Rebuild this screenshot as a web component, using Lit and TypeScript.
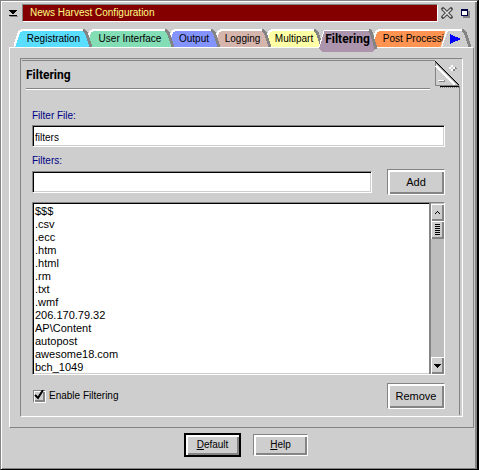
import { LitElement, html, svg, css } from "lit";
import { customElement, property, state } from "lit/decorators.js";
import { classMap } from "lit/directives/class-map.js";

interface Tab {
  label: string;
  width: number;
  color: string;
}

const TABS: Tab[] = [
  { label: "Registration", width: 79, color: "#5adeff" },
  { label: "User Interface", width: 90, color: "#84deb5" },
  { label: "Output", width: 54, color: "#8494ff" },
  { label: "Logging", width: 59, color: "#d6b5ad" },
  { label: "Multipart", width: 60, color: "#ffffa5" },
  { label: "Filtering", width: 63, color: "#ad94ad" },
  { label: "Post Processing", width: 96, color: "#ff9452" },
];

const FILTERS = [
  "$$$", ".csv", ".ecc", ".htm", ".html", ".rm", ".txt", ".wmf",
  "206.170.79.32", "AP\\Content", "autopost", "awesome18.com", "bch_1049",
];

/** Trapezoid outline shared by every tab: lit on the left, shaded on the right. */
function tabShape(w: number, h: number, color: string) {
  return svg`
    <path d="M0 ${h} L1 ${h - 3} L5 3 L8 0 H${w - 9} L${w - 7} 2 L${w - 1} ${h - 2} V${h} Z" fill=${color}></path>
    <path d="M${w - 10} 1 L${w - 7} 3 L${w - 2} ${h}" fill="none" stroke="#848484" stroke-width="3"></path>
    <path d="M0 ${h} L1 ${h - 3} L5 3 L8 1 H${w - 10}" fill="none" stroke="#fff" stroke-width="2"></path>`;
}

@customElement("config-tab")
export class ConfigTab extends LitElement {
  @property() label = "";
  @property() color = "";
  @property({ type: Number }) width = 60;
  @property({ type: Boolean }) active = false;

  static styles = css`
    :host { display: block; flex: none; }
    .tab {
      position: relative;
      display: block;
      height: 18px;
      padding: 0;
      border: 0;
      background: none;
      color: #000;
      font: 10px/20px "Liberation Sans", Arial, sans-serif;
      white-space: nowrap;
    }
    .tab.active { height: 23px; font-family: Roboto, sans-serif; font-weight: bold; font-size: 12px; }
    .active .text { height: 23px; }
    .shape { position: absolute; left: 0; top: 0; }
    .text { position: relative; display: block; }
  `;

  render() {
    const h = this.active ? 23 : 18;
    return html`
      <button class=${classMap({ tab: true, active: this.active })} role="tab"
        aria-selected=${this.active ? "true" : "false"} style="width:${this.width}px">
        <svg class="shape" width=${this.width} height=${h} aria-hidden="true" shape-rendering="crispEdges">
          ${this.active
            ? svg`
              <path d="M3 19 L9 1 H${this.width - 9} L${this.width - 2} 19 L${this.width - 7} 23 H6 Z" fill=${this.color}></path>
              <path d="M${this.width - 10} 1 L${this.width - 8} 3 L${this.width - 3} 20" fill="none" stroke="#848484" stroke-width="3"></path>
              <path d="M3 18 L8 2 L10 1 H${this.width - 10}" fill="none" stroke="#fff" stroke-width="1"></path>`
            : tabShape(this.width, h, this.color)}
        </svg>
        <span class="text">${this.label}</span>
      </button>`;
  }
}

@customElement("app-root")
export class AppRoot extends LitElement {
  @state() private enabled = true;

  static styles = css`
    :host {
      display: block;
      color: #000;
      font: 10px/14px "Liberation Sans", Arial, sans-serif;
    }
    * { box-sizing: border-box; }
    button, input, select { font: inherit; color: inherit; margin: 0; border-radius: 0; }
    svg { display: block; }

    .window {
      display: flex;
      flex-direction: column;
      min-height: 100vh;
      padding: 2px 2px 0 4px;
      background: #cecece;
      border: 1px solid #848484;
      border-right: 2px solid #000;
      border-bottom: 1px solid #000;
      box-shadow: inset 1px 1px #fff, inset -2px -1px #848484;
    }

    .titlebar { display: flex; align-items: center; padding: 1px 5px 0 0; }
    .icon { flex: none; padding: 0; border: 0; background: none; }
    .sysmenu { width: 17px; padding-left: 4px; }
    .title {
      flex: 1;
      height: 18px;
      margin: 0 3px 0 0;
      padding-left: 7px;
      background: #840000;
      border: 1px solid #848484;
      border-color: #848484 #fff #fff #848484;
      color: #ffff84;
      font-size: 10px;
      font-weight: normal;
      line-height: 16px;
    }
    .max { margin-left: 7px; }

    .tabs { display: flex; position: relative; height: 18px; margin: 7px 0 0 9px; }
    .tabs config-tab { position: relative; }
    .tabs config-tab + config-tab { margin-left: -8px; }
    .scroller {
      position: absolute;
      z-index: 30;
      right: 3px;
      top: 0;
      background: #cecece;
      clip-path: polygon(0 100%, 5px 0, 100% 0, 100% 100%);
    }

    .page {
      flex: 1;
      display: flex;
      margin: 0 1px 0 4px;
      padding: 10px;
      border: 1px solid #fff;
      border-right-color: #848484;
      border-bottom-color: #848484;
    }
    .group {
      flex: 1;
      display: flex;
      flex-direction: column;
      position: relative;
      padding: 2px 2px 6px 5px;
      border: 1px solid #848484;
      border-right: 1px solid #fff;
      border-bottom: 1px solid #fff;
    }
    .group::before {
      content: "";
      position: absolute;
      left: 1px; top: 1px; right: 27px;
      height: 1px;
      background: #848484;
    }
    .group::after {
      content: "";
      position: absolute;
      right: 2px; top: 27px; bottom: 1px;
      width: 1px;
      background: #848484;
    }
    .fold { position: absolute; right: 0; top: 0; }
    .heading {
      height: 29px;
      margin: 0 30px 0 0;
      border-bottom: 1px solid #fff;
      box-shadow: inset 0 -1px #848484;
      font: bold 12px/28px Roboto, sans-serif;
    }
    .form { flex: 1; display: flex; flex-direction: column; padding: 18px 15px 0 6px; }
    .label { color: #000084; line-height: 16px; }
    .field {
      width: 100%;
      height: 22px;
      padding: 3px 2px 0;
      background: #fff;
      border: 1px solid #848484;
      border-right-color: #fff;
      border-bottom-color: #fff;
      box-shadow: inset 1px 1px #000, inset -1px -1px #cecece;
      outline: none;
    }
    .filename { margin: 1px 0 6px; }
    .addrow { display: grid; grid-template-columns: 1fr 58px; column-gap: 15px; align-items: center; }

    .btn {
      padding: 0;
      background: #cecece;
      border: 1px solid #848484;
      border-right-color: #fff;
      border-bottom-color: #fff;
      box-shadow: inset 2px 2px #fff, inset -2px -2px #848484;
      text-align: center;
    }
    .tall { height: 26px; font-size: 11px; line-height: 24px; }
    .footer { display: flex; justify-content: center; align-items: center; gap: 12px; height: 41px; padding: 0 0 8px 12px; }
    .footer .btn { width: 55px; height: 22px; }
    .footer .default { width: 57px; height: 24px; border: 2px solid #000; }

    .listbox {
      display: grid;
      grid-template-columns: 1fr 15px;
      height: 173px;
      margin: 7px 0 8px;
      background: #fff;
      border: 1px solid #848484;
      border-right-color: #fff;
      border-bottom-color: #fff;
      box-shadow: inset 1px 1px #000, inset 0 -1px #cecece;
    }
    .list {
      width: 100%;
      height: 171px;
      padding: 2px 0 0;
      background: none;
      border: 0;
      outline: none;
      overflow: hidden;
      appearance: none;
      font-size: 11px;
      line-height: 13px;
    }
    .list option { height: 13px; min-height: 13px; padding: 0 2px; line-height: 13px; }
    .scroll {
      display: flex;
      flex-direction: column;
      padding-top: 1px;
      background: #bdbdbd;
      border-left: 2px solid #848484;
    }
    .arrow, .thumb {
      display: grid;
      place-items: center;
      width: 13px;
      height: 17px;
      padding: 0;
      background: #cecece;
      border: 0;
      box-shadow: inset 1px 1px #fff, inset -2px -2px #848484;
    }
    .thumb { height: 18px; }
    .down { margin-top: auto; }

    .actions { display: flex; justify-content: space-between; align-items: center; }
    .remove { width: 58px; }
    .check { display: flex; align-items: center; gap: 3px; padding-left: 1px; }
    .box { position: relative; display: block; width: 13px; height: 13px; }
    .box input {
      appearance: none;
      display: block;
      width: 13px;
      height: 13px;
      background: #cecece;
      border: 1px solid #848484;
      border-right-color: #fff;
      border-bottom-color: #fff;
      box-shadow: inset 1px 1px #fff, inset -2px -2px #848484;
    }
    .tick { position: absolute; left: 1px; top: 0; pointer-events: none; }
  `;

  render() {
    return html`
      <main class="window">
        <header class="titlebar">
          <button class="icon sysmenu" aria-label="System menu">
            <svg width="9" height="7" shape-rendering="crispEdges"><path d="M0 0H8V1H7V2H6V3H5V4H3V3H2V2H1V1H0Z M0 5H8V6H0Z" fill="#000"></path><path d="M8 1V2H7V3H6V4H5V5M1 6H9V7H1Z" fill="#848484"></path></svg>
          </button>
          <h1 class="title">News Harvest Configuration</h1>
          <button class="icon" aria-label="Close">
            <svg width="13" height="12"><path d="M2 2 L10 10 M10 2 L2 10" stroke="#424242" stroke-width="3.6" stroke-linecap="round"></path><path d="M2 2 L10 10 M10 2 L2 10" stroke="#dedede" stroke-width="1.6"></path></svg>
          </button>
          <button class="icon max" aria-label="Maximize">
            <svg width="9" height="9" shape-rendering="crispEdges"><path d="M2 2H9V9H2Z" fill="#848484"></path><path d="M0 0H7V7H0Z" fill="#000042"></path><path d="M1 2H6V6H1Z" fill="#fff"></path></svg>
          </button>
        </header>

        <nav class="tabs" role="tablist">
          ${TABS.map((t, i) => html`
            <config-tab .label=${t.label} .color=${t.color} .width=${t.width}
              .active=${i === 5} style="z-index:${i === 5 ? 20 : 10 - i}"></config-tab>`)}
          <button class="icon scroller" aria-label="More tabs">
            <svg width="31" height="18" shape-rendering="crispEdges">
              <path d="M0 18 L6 1 H21" fill="none" stroke="#fff" stroke-width="2"></path>
              <path d="M21 1 L24 3 L29 18" fill="none" stroke="#848484" stroke-width="3"></path>
              <path d="M9 5 L20 10 L9 15Z" fill="#00f"></path>
            </svg>
          </button>
        </nav>

        <section class="page">
          <div class="group">
            <svg class="fold" width="30" height="32" shape-rendering="crispEdges" aria-hidden="true">
              <path d="M3.500 2V26.500H27" fill="none" stroke="#848484"></path>
              <path d="M4 7L23 26" stroke="#fff" stroke-width="2"></path>
              <path d="M3 3L26 26" stroke="#848484" stroke-width="1"></path>
              <path d="M3 2L27 26" stroke="#000" stroke-width="1"></path>
              <path d="M8 27.500H27" stroke="#000"></path>
              <path d="M8 28.500H27" stroke="#848484" stroke-dasharray="1 1"></path>
              <path d="M7 23H13V21H12V22H7Z M18 10H21V12H23V10H25V9H24V8H21V6H20V9H18Z" fill="#848484"></path>
              <path d="M6 21H12V22H6Z M17 8H19V6H21V8H23V10H21V12H19V10H17Z" fill="#fff"></path>
              <path d="M19 8H21V10H19Z" fill="#cecece"></path>
            </svg>
            <h2 class="heading">Filtering</h2>
            <div class="form">
              <label class="label" for="file">Filter File:</label>
              <input class="field filename" id="file" .value=${"filters"}>
              <label class="label" for="filter">Filters:</label>
              <div class="addrow">
                <input class="field" id="filter">
                <button class="btn tall">Add</button>
              </div>
              <div class="listbox">
                <select class="list" multiple size="13" aria-label="Filters">
                  ${FILTERS.map((f) => html`<option>${f}</option>`)}
                </select>
                <div class="scroll">
                  <button class="arrow" aria-label="Scroll up">
                    <svg width="5" height="3" shape-rendering="crispEdges"><path d="M2 0H3V1H4V2H5V3H4V2H3V1H2V2H1V3H0V2H1V1H2Z"></path></svg>
                  </button>
                  <div class="thumb">
                    <svg width="5" height="12" shape-rendering="crispEdges"><path d="M0 0H5V1H0ZM0 2H5V3H0ZM0 4H5V5H0ZM0 6H5V7H0ZM0 8H5V9H0ZM0 10H5V11H0Z"></path></svg>
                  </div>
                  <button class="arrow down" aria-label="Scroll down">
                    <svg width="7" height="4" shape-rendering="crispEdges"><path d="M0 0H7V1H6V2H5V3H4V4H3V3H2V2H1V1H0Z"></path></svg>
                  </button>
                </div>
              </div>
              <div class="actions">
                <label class="check">
                  <span class="box">
                    <input type="checkbox" .checked=${this.enabled}
                      @change=${(e: Event) => (this.enabled = (e.target as HTMLInputElement).checked)}>
                    ${this.enabled ? html`<svg class="tick" width="11" height="11"><path d="M1 5L4 8L9 0" fill="none" stroke="#000" stroke-width="2"></path></svg>` : ""}
                  </span>
                  Enable Filtering
                </label>
                <button class="btn tall remove">Remove</button>
              </div>
            </div>
          </div>
        </section>

        <footer class="footer">
          <button class="btn default"><u>D</u>efault</button>
          <button class="btn"><u>H</u>elp</button>
        </footer>
      </main>`;
  }
}
